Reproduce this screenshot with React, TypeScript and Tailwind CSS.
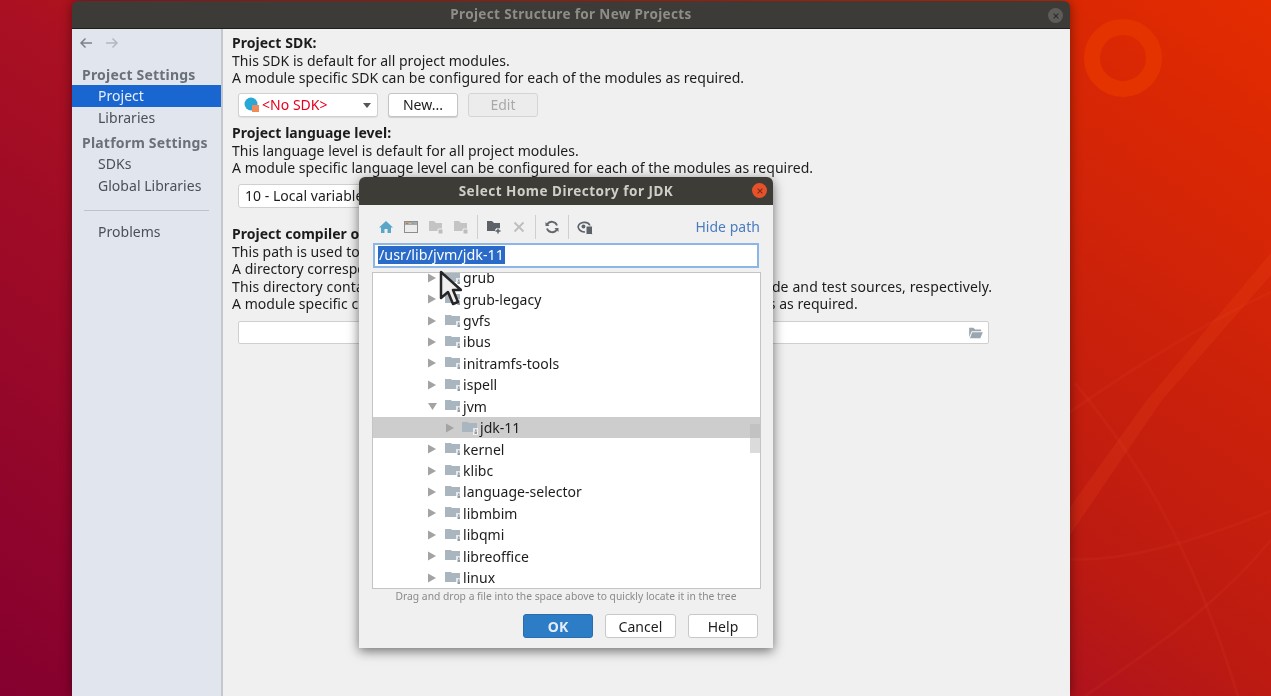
import React from "react";

const treeRows = [
  { name: "grub" },
  { name: "grub-legacy" },
  { name: "gvfs" },
  { name: "ibus" },
  { name: "initramfs-tools" },
  { name: "ispell" },
  { name: "jvm", open: true },
  { name: "jdk-11", child: true },
  { name: "kernel" },
  { name: "klibc" },
  { name: "language-selector" },
  { name: "libmbim" },
  { name: "libqmi" },
  { name: "libreoffice" },
  { name: "linux" },
];

function Folder({ className = "" }: { className?: string }) {
  return (
    <svg viewBox="0 0 16 14" className={"h-[14px] w-[16px] shrink-0 " + className}>
      <path d="M0 1h6l1 1h8v9H0z" fill="#a9b6bf" />
      <path d="M11 7h5v7h-5z" fill="#ffffff" fillOpacity="0.7" />
      <path d="M13 8.500h1.500v1.500H13zM12.500 10.500h2.500V13h-2.500z" fill="#8f9ca5" />
    </svg>
  );
}

function Arrow({ open = false }: { open?: boolean }) {
  return (
    <svg viewBox="0 0 10 10" className="h-[10px] w-[10px] shrink-0">
      {open ? <path d="M0 2h9L4.500 9z" fill="#a3a3a3" /> : <path d="M0 0.500l8 4.500-8 4.500z" fill="#a3a3a3" />}
    </svg>
  );
}

function ToolIcon({ children }: { children: React.ReactNode }) {
  return (
    <svg viewBox="0 0 16 16" className="h-4 w-4 shrink-0">
      {children}
    </svg>
  );
}

function Sep() {
  return <div className="-mx-px h-[24px] w-px bg-[#cfcfcf]" />;
}

export default function App() {
  return (
    <div className="relative h-[696px] w-[1271px] overflow-hidden bg-[linear-gradient(35deg,#85002f_0%,#aa1022_44%,#bb1a12_56%,#e42c00_100%)] pl-[72px] pt-px font-['Noto_Sans',sans-serif] text-[14px] tracking-[0.03px] text-[#1c1c1c] blur-[0.4px]">
      {/* wallpaper ring and streaks */}
      <div className="absolute left-[1084px] top-[19px] h-[78px] w-[78px] rounded-full border-[16px] border-[#e53300]" />
      <svg viewBox="0 0 1271 696" className="absolute left-0 top-0 h-[696px] w-[1271px]">
        <path d="M1271 253v22L1162 400l-92 135v-28l77-107z" fill="#ff5a20" fillOpacity="0.13" />
        <g fill="none" stroke="#ff6a40" strokeOpacity="0.07" strokeWidth="3">
          <path d="M1271 292C1200 325 1130 370 1070 412" />
          <path d="M1075 383C1128 448 1187 530 1238 696" />
          <path d="M1070 559C1120 562 1187 545 1271 511" />
          <path d="M1271 540C1215 608 1150 650 1085 696" />
        </g>
      </svg>

      {/* main window */}
      <div className="relative flex h-[695px] w-[998px] flex-col overflow-hidden rounded-t-md shadow-[0_0_12px_rgba(0,0,0,0.45)]">
        <div className="relative flex h-[28px] shrink-0 items-center justify-center border-b border-[#1f1e1b] bg-[#3c3b37] text-[13.500px] font-bold tracking-[0.35px] text-[#8f8d88]">
          Project Structure for New Projects
          <div className="absolute right-[7px] top-[7px] flex h-[15px] w-[15px] items-center justify-center rounded-full bg-[#5d5c58] text-[#2b2a28]">
            <svg viewBox="0 0 10 10" className="h-[8px] w-[8px]">
              <path d="M2 2l6 6M8 2l-6 6" stroke="currentColor" strokeWidth="1.300" />
            </svg>
          </div>
        </div>

        <div className="flex min-h-0 flex-1">
          {/* sidebar */}
          <aside className="flex w-[151px] shrink-0 flex-col border-r-2 border-[#c3c8cd] bg-[#e1e6ee] text-[#4a5057]">
            <div className="flex h-[28px] items-center gap-[12px] pl-[7px]">
              <svg viewBox="0 0 14 12" className="h-[12px] w-[14px]">
                <path d="M13 6H2M6.500 1.500L2 6l4.500 4.500" fill="none" stroke="#7d8287" strokeWidth="1.500" />
              </svg>
              <svg viewBox="0 0 14 12" className="h-[12px] w-[14px]">
                <path d="M1 6h11M7.500 1.500L12 6l-4.500 4.500" fill="none" stroke="#b4b8bd" strokeWidth="1.500" />
              </svg>
            </div>
            <div className="mt-[6px] flex h-[22px] items-center pl-[10px] font-bold tracking-[0.2px] text-[#6b7178]">Project Settings</div>
            <div className="flex h-[22px] items-center bg-[#1a66d0] pb-[2px] pl-[26px] text-[#e8eef8]">Project</div>
            <div className="flex h-[22px] items-center pb-[2px] pl-[26px]">Libraries</div>
            <div className="mt-[2px] flex h-[22px] items-center pl-[10px] font-bold tracking-[0.2px] text-[#6b7178]">Platform Settings</div>
            <div className="flex h-[22px] items-center pb-[2px] pl-[26px]">SDKs</div>
            <div className="flex h-[22px] items-center pb-[2px] pl-[26px]">Global Libraries</div>
            <div className="mx-[12px] mt-[13px] h-px bg-[#bfc3c8]" />
            <div className="mt-[10px] flex h-[22px] items-center pb-[2px] pl-[26px]">Problems</div>
          </aside>

          {/* settings */}
          <main className="flex-1 bg-[#f0f0f0] pl-[9px] pt-[5px] leading-[17.500px]">
            <div className="font-bold">Project SDK:</div>
            <div>This SDK is default for all project modules.</div>
            <div>A module specific SDK can be configured for each of the modules as required.</div>
            <div className="ml-[6px] mt-[6.500px] flex h-[24px] gap-[10px]">
              <div className="flex w-[140px] items-center rounded-[3px] border border-[#d0d0d0] bg-white pl-[5px] pr-[6px] shadow-[0_1px_1px_rgba(0,0,0,0.08)]">
                <svg viewBox="0 0 16 16" className="h-4 w-4 shrink-0">
                  <circle cx="7" cy="7" r="6.500" fill="#29a8d8" />
                  <rect x="8" y="8" width="7" height="7" fill="#f08a5a" />
                </svg>
                <span className="ml-[2px] flex-1 text-[#e6001e]">&lt;No SDK&gt;</span>
                <svg viewBox="0 0 8 5" className="h-[5px] w-[8px]">
                  <path d="M0 0h8L4 5z" fill="#555" />
                </svg>
              </div>
              <div className="flex w-[70px] items-center justify-center rounded-[3px] border border-[#c4c4c4] bg-white shadow-[0_1px_1px_rgba(0,0,0,0.15)]">New...</div>
              <div className="flex w-[70px] items-center justify-center rounded-[3px] border border-[#d4d4d4] bg-[#ececec] text-[#a9a9a9]">Edit</div>
            </div>
            <div className="mt-[7px] font-bold">Project language level:</div>
            <div>This language level is default for all project modules.</div>
            <div>A module specific language level can be configured for each of the modules as required.</div>
            <div className="ml-[6px] mt-[7.500px] flex h-[24px] w-[250px] items-center rounded-[3px] border border-[#d0d0d0] bg-white pl-[6px]">
              10 - Local variable type
            </div>
            <div className="mt-[17px] font-bold">Project compiler output:</div>
            <div>This path is used to store all project compilation results.</div>
            <div>A directory corresponding to each module is created under this path.</div>
            <div className="tracking-[0.12px]">This directory contains two subdirectories: Production and Test for production code and test sources, respectively.</div>
            <div>A module specific compiler output path can be configured for each of the modules as required.</div>
            <div className="ml-[6px] mt-[8.500px] flex h-[23px] w-[751px] items-center justify-end rounded-[2px] border border-[#cfcfcf] bg-white pr-[5px]">
              <svg viewBox="0 0 16 14" className="h-[12px] w-[14px]">
                <path d="M0 1h5l2 2h7v2H3L0 12zM3.500 6H16l-3 7H1z" fill="#9aa7b0" />
              </svg>
            </div>
          </main>
        </div>
      </div>

      {/* file chooser dialog */}
      <div className="absolute left-[359px] top-[177px] flex h-[471px] w-[414px] flex-col overflow-hidden rounded-t-md bg-[#f0f0f0] shadow-[0_3px_12px_rgba(0,0,0,0.55)]">
        <div className="relative flex h-[28px] shrink-0 items-center justify-center bg-[#3d3c37] text-[13.500px] font-bold tracking-[0.5px] text-[#d0cec8]">
          Select Home Directory for JDK
          <div className="absolute right-[6px] top-[6px] flex h-[15px] w-[15px] items-center justify-center rounded-full bg-[#e5512a] text-[#7c2a14]">
            <svg viewBox="0 0 10 10" className="h-[8px] w-[8px]">
              <path d="M2 2l6 6M8 2l-6 6" stroke="currentColor" strokeWidth="1.300" />
            </svg>
          </div>
        </div>

        <div className="flex h-[38px] shrink-0 items-center gap-[9px] pl-[18.500px] pr-[13px] pt-[5px]">
          <ToolIcon>
            <path d="M8 2L1 8.500h2V14h3.500v-4h3v4H13V8.500h2z" fill="#5aa6c8" />
          </ToolIcon>
          <ToolIcon>
            <rect x="1.500" y="2.500" width="13" height="11" fill="#ececec" stroke="#8d8d8d" />
            <rect x="2" y="3" width="12" height="3" fill="#a8a8a8" />
            <path d="M3 4h2v1H3z" fill="#d96b4b" />
            <path d="M6 4h2v1H6z" fill="#e0c04f" />
            <path d="M9 4h2v1H9z" fill="#6aa8d8" />
          </ToolIcon>
          <ToolIcon>
            <path d="M1 2h5l2 2h6v8H1z" fill="#c4c4c4" />
            <path d="M10 10h5v5h-5z" fill="#bdbdbd" stroke="#f0f0f0" />
          </ToolIcon>
          <ToolIcon>
            <path d="M1 2h5l2 2h6v8H1z" fill="#c4c4c4" />
            <path d="M10 10h5v5h-5z" fill="#bdbdbd" stroke="#f0f0f0" />
          </ToolIcon>
          <Sep />
          <ToolIcon>
            <path d="M1 2h5l2 2h6v8H1z" fill="#5c6267" />
            <path d="M12 9v6M9 12h6" stroke="#f0f0f0" strokeWidth="3.500" />
            <path d="M12 9.500v5M9.500 12h5" stroke="#5c6267" strokeWidth="1.500" />
          </ToolIcon>
          <ToolIcon>
            <path d="M3.500 3.500l9 9M12.500 3.500l-9 9" stroke="#bdbdbd" strokeWidth="1.800" />
          </ToolIcon>
          <Sep />
          <ToolIcon>
            <path d="M13 6.500A5.300 5.300 0 0 0 3.300 5.500M3 9.500a5.300 5.300 0 0 0 9.700 1" fill="none" stroke="#62676b" strokeWidth="1.800" />
            <path d="M1.500 3v4h4zM14.500 13V9h-4z" fill="#62676b" />
          </ToolIcon>
          <Sep />
          <ToolIcon>
            <path d="M1 8c1.500-6 10.500-6 12-1" fill="none" stroke="#5c6267" strokeWidth="1.600" />
            <path d="M1 8c1 3 4 5 7 5" fill="none" stroke="#5c6267" strokeWidth="1.600" />
            <circle cx="6.500" cy="7.500" r="2" fill="#5c6267" />
            <rect x="9" y="7" width="6.500" height="8.500" rx="1" fill="#5c6267" stroke="#f0f0f0" />
          </ToolIcon>
          <div className="ml-auto text-[#4a7cc0]">Hide path</div>
        </div>

        <div className="mx-[14px] flex h-[25px] shrink-0 items-center border-2 border-[#8ab7e5] bg-white pb-px pl-[3px]">
          <span className="bg-[#2a6bc9] px-px text-[14.300px] leading-[18px] text-white">/usr/lib/jvm/jdk-11</span>
        </div>

        <div className="ml-[13px] mr-[12px] mt-[4px] h-[317px] shrink-0 overflow-hidden border border-[#c4c4c4] bg-white">
          <div className="relative -mt-[6px]">
            {treeRows.map((row) => (
              <div key={row.name} className={"flex h-[21.430px] items-center " + (row.child ? "bg-[#cdcdcd] pl-[73px]" : "pl-[55px]")}>
                <Arrow open={row.open} />
                <Folder className={row.child ? "ml-[6px]" : "ml-[7px]"} />
                <span className="ml-[2px]">{row.name}</span>
              </div>
            ))}
            {/* scrollbar */}
            <div className="absolute right-0 top-[157px] h-[29px] w-[10px] bg-[#b8b8b8]/50" />
          </div>
        </div>

        <div className="h-[14px] shrink-0 text-center text-[10.300px] leading-[14px] tracking-normal text-[#8a8a8a]">
          Drag and drop a file into the space above to quickly locate it in the tree
        </div>

        <div className="mt-[11px] flex h-[24px] justify-end gap-[12px] pr-[15px]">
          <div className="flex w-[70px] items-center justify-center rounded-[3px] border border-[#2a6cad] bg-[#2d7cc6] font-bold text-[#e4eef8]">OK</div>
          <div className="flex w-[71px] items-center justify-center rounded-[3px] border border-[#c8c8c8] bg-white">Cancel</div>
          <div className="flex w-[70px] items-center justify-center rounded-[3px] border border-[#c8c8c8] bg-white">Help</div>
        </div>
      </div>

      {/* mouse pointer */}
      <svg viewBox="0 0 24 38" className="absolute left-[438px] top-[269px] h-[38px] w-[24px]">
        <path d="M3 3v26l7-6 5 12 5-2-5-12h8z" fill="#eeeeee" stroke="#262626" strokeWidth="2.500" strokeLinejoin="round" />
      </svg>
    </div>
  );
}
